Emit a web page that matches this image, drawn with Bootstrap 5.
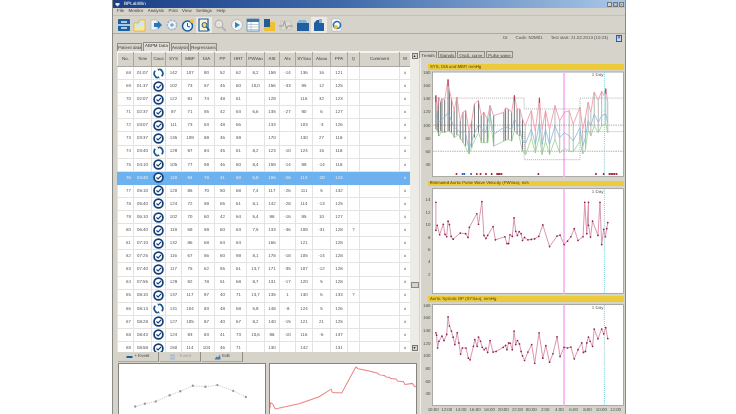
<!DOCTYPE html>
<html lang="en">
<head>
<meta charset="utf-8">
<title>BPLabWin</title>
<link rel="stylesheet" href="https://cdn.jsdelivr.net/npm/bootstrap@5.3.0/dist/css/bootstrap.min.css">
<style>
html,body{height:414px;overflow:hidden;background:#fff}
body{font-family:"Liberation Sans",Arial,sans-serif;font-size:4.4px;line-height:1;color:#444;text-rendering:geometricPrecision}
.appwin{margin-left:112px;width:514px;height:414px;background:#d6d3cb;border-left:1px solid #8a8a86;border-right:1px solid #8a8a86;overflow:hidden;filter:blur(.3px)}
.titlebar{height:8px;padding:0 1px 0 2px;background:linear-gradient(90deg,#1c3f86 0,#3f69aa 45%,#a9c8e8 100%);color:#fff;font-size:4.6px}
.winbtn{width:5px;height:5px;background:#d6d3cb;border:.5px solid #777;color:#333;font-size:4px;text-align:center;margin-left:1px}
.menubar{height:8px;padding-left:4px;gap:4.500px;color:#3c3c3c;border-bottom:1px solid #c4c1b8}
.toolbar{height:17px;padding-left:3px}
.tool{width:16px;height:16px;flex:none;padding:1px}
.tool svg{display:block;width:14px;height:14px}
.tool.on{background:#ece9e2}
.tool-gap{margin-left:1px}
.infobar{height:10px;gap:8px;padding-right:3px;border-top:1px solid #aaa8a0;color:#4c4c4c}
.closex{width:6px;height:7px;background:#cfd8ea;border:.5px solid #345a9a;color:#1c3f86;font-weight:700;font-size:5px;text-align:center}
.leftcol{width:306px;flex:none;padding-left:4px}
.rightcol{flex:1 1 auto;padding-top:8px;min-width:0}
.tabline{height:9px;gap:1px;border-bottom:1px solid #f4f3ef}
.tabitem{height:8px;flex:none;padding:2px 0 0;border:.5px solid #8f8d86;border-bottom:0;background:#d6d3cb;color:#3c3c3c;text-align:center;white-space:nowrap;overflow:hidden}
.tabitem.on{height:9px;padding-top:1px;background:#e0ddd6;color:#333}
.lt1{width:25px}.lt2{width:27px}.lt3{width:18px}.lt4{width:27px}
.rtabs{height:7px;gap:1px}
.rtabs .tabitem{height:7px;padding-top:1.500px;border-bottom:.5px solid #8f8d86}
.rtabs .tabitem.on{border-bottom:0;background:#d6d3cb}
.tw1{width:18px}.tw2{width:18px}.tw3{width:28px}.tw4{width:27px}
.gridwrap{height:300px;overflow:hidden}
.datagrid{width:292px;table-layout:fixed;margin:0;border-collapse:collapse;background:#fff}
.datagrid th,.datagrid td{height:13.1px;padding:0 2px;border:1px solid #e4e3df;text-align:center;vertical-align:middle;font-size:4.4px;font-weight:400;color:#4c4c4c;background:#fff;box-shadow:none;overflow:hidden;white-space:nowrap}
.datagrid thead th{height:14px;background:#d6d3cb;border-color:#a9a7a0;border-top-color:#f4f3ef;border-left-color:#f4f3ef;color:#3c3c3c;padding:0}
.datagrid td:first-child{text-align:right;color:#5c5c5c}
.datagrid tr.picked td{background:#6eb1ef;color:#e9f3fc;border-color:#6eb1ef}
.datagrid td.ic{padding:0;overflow:visible}
.datagrid td svg{display:block;width:11px;height:11px;margin:auto}
.c1{width:16px}.c2{width:18px}.c3{width:14px}.c4{width:16px}.c5{width:17px}.c6{width:16px}.c7{width:16px}.c8{width:16px}.c9{width:18px}.c10{width:15px}.c11{width:16px}.c12{width:17px}.c13{width:18px}.c14{width:17px}.c15{width:12px}.c16{width:40px}.c17{width:11px}
.vscroll{width:9px;flex:none;height:300px;background:#ecebe6}
.sbtn{height:6px;width:6px;margin:1px auto;background:#d6d3cb;border:.5px solid #777;color:#222;font-size:4px;text-align:center}
.sthumb{height:6px;width:8px;margin:0 auto;background:#d6d3cb;border:.5px solid #888}
.btnstrip{height:11px;gap:1px;padding-left:1px}
.evbtn{width:41px;height:10px;background:#d6d3cb;border-right:1px solid #8f8d86;border-bottom:1px solid #aaa8a0;color:#3c3c3c}
.evbtn.off{color:#9d9b94}
.evbtn svg{width:7px;height:6px;margin-right:1px}
.miniplots{height:51px;gap:3px;padding-left:1px}
.miniplot{width:148px;height:51px;background:#fff;border:1px solid #85837d;border-bottom:0;flex:none}
.miniplot svg{display:block;width:100%;height:100%}
.trendbox{height:356px;overflow:hidden;margin-left:1px;padding:6px 1px 0 7px;border-left:1px solid #f1f0ec;background:#d6d3cb}
.charttitle{height:5.500px;width:196px;background:#eccb3b;color:#4d420f;padding:.7px 2px 0;font-size:4.3px;white-space:nowrap}
.plotsvg{display:block;width:202px;margin-left:-6px}
.p1{height:110px;margin-bottom:1px}.p2{height:107px;margin-top:2px;margin-bottom:1px}.p3{height:110px;margin-top:2px}
.plotsvg text{font-family:"Liberation Sans",Arial,sans-serif;font-size:13px;fill:#4c4c4c}
</style>
</head>
<body>
<svg width="0" height="0" class="position-absolute">
  <symbol id="clk" viewBox="0 0 12 12"><circle cx="6" cy="6" r="4.8" fill="#fff" stroke="#123f75" stroke-width="1.900"/><path d="M3.800 6.100 5.600 7.500 8.800 4.200" fill="none" stroke="#123f75" stroke-width="1.300"/></symbol>
  <symbol id="rfr" viewBox="0 0 12 12"><path d="M6.800 1.300A4.700 4.700 0 0 1 9.600 9M5.200 10.700A4.700 4.700 0 0 1 2.400 3" fill="none" stroke="#1a5590" stroke-width="1.900"/><path d="M4.600 .6 7.400 1.300 6 3.400M7.400 11.400 4.600 10.700 6 8.600" fill="#1a5590"/></symbol>
</svg>

<div class="appwin d-flex flex-column">
  <div class="titlebar d-flex align-items-center">
    <svg width="5" height="5" viewBox="0 0 10 10" class="me-1"><path d="M1 2h8v3l-4 4-4-4z" fill="#dfe9f7"/></svg>
    <span>BPLabWin</span>
    <span class="winbtn ms-auto">_</span><span class="winbtn">□</span><span class="winbtn">×</span>
  </div>
  <div class="menubar d-flex align-items-center"><span>File</span><span>Monitor</span><span>Analysis</span><span>Print</span><span>View</span><span>Settings</span><span>Help</span></div>
  <div class="toolbar d-flex align-items-center">
    <div class="tool"><svg viewBox="0 0 14 14"><rect x="1" y="1" width="12" height="12" rx="1" fill="#1b5f9e"/><path d="M4 4h6M4 10h6M1 7h12" stroke="#d7ecfb" stroke-width="1.600"/></svg></div>
    <div class="tool"><svg viewBox="0 0 14 14"><path d="M1 5h5V2h6v11H1z" fill="#f9e7a0" stroke="#d4a92a" stroke-width=".6"/><path d="M3 6h4V3h4v4H7v3H3z" fill="#cfe6f7"/></svg></div>
    <div class="tool"><svg viewBox="0 0 14 14"><path d="M2 2h6v10H2z" fill="#eef3f8" stroke="#9ab" stroke-width=".5"/><path d="M5 5h4V3l4 4-4 4V9H5z" fill="#2477b8"/></svg></div>
    <div class="tool"><svg viewBox="0 0 14 14"><circle cx="7" cy="7" r="4.600" fill="#f3f5f7" stroke="#9db5cc" stroke-width="1.600" stroke-dasharray="2.200 1"/><circle cx="7" cy="7" r="1.800" fill="#6fa6d4"/></svg></div>
    <div class="tool"><svg viewBox="0 0 14 14"><circle cx="6.500" cy="8" r="5" fill="#eef5fb" stroke="#1c5d9c" stroke-width="1.500"/><path d="M6.500 5v3.300L9 9" fill="none" stroke="#1c5d9c"/><circle cx="11" cy="3" r="2" fill="#f1c232"/></svg></div>
    <div class="tool on"><svg viewBox="0 0 14 14"><path d="M2 1h9v12H2z" fill="#fdf6d6" stroke="#1c5d9c" stroke-width="1.200"/><circle cx="7.500" cy="7" r="2.500" fill="#f6d565" stroke="#1c5d9c"/><path d="M9.500 9l3 3.500" stroke="#1c5d9c" stroke-width="1.500"/></svg></div>
    <div class="tool"><svg viewBox="0 0 14 14"><circle cx="6" cy="6" r="3.800" fill="#e3e1db" stroke="#b3b1aa" stroke-width="1.200"/><path d="M8.800 8.800 13 13" stroke="#b3b1aa" stroke-width="1.800"/></svg></div>
    <div class="tool tool-gap"><svg viewBox="0 0 14 14"><circle cx="7" cy="7" r="5.500" fill="#f3f4f4" stroke="#b6bcc2"/><path d="M5 4l5 3-5 3z" fill="#2f83bf"/></svg></div>
    <div class="tool"><svg viewBox="0 0 14 14"><rect x="1" y="1" width="12" height="12" fill="#fff" stroke="#5a86ad" stroke-width=".8"/><rect x="1" y="1" width="12" height="3" fill="#3a76aa"/><path d="M1 6.500h12M1 9h12M1 11.500h12M5 4v9" stroke="#9db7cd" stroke-width=".7"/></svg></div>
    <div class="tool tool-gap"><svg viewBox="0 0 14 14"><rect x="1" y="1" width="6" height="12" fill="#1f5c99"/><rect x="7" y="4" width="5" height="9" fill="#efc132"/><rect x="1" y="9" width="6" height="4" fill="#efc132"/></svg></div>
    <div class="tool"><svg viewBox="0 0 14 14"><rect x="2" y="3" width="10" height="9" fill="#dcdad4" stroke="#bbb9b2" stroke-width=".6"/><path d="M0 8h4l1.500-5 2 8 1.500-3h5" fill="none" stroke="#9a9892" stroke-width="1"/></svg></div>
    <div class="tool tool-gap"><svg viewBox="0 0 14 14"><path d="M1 5 3 2h7l1 3z" fill="#7fb1d9"/><rect x="1" y="5" width="12" height="8" fill="#1f5f9f"/></svg></div>
    <div class="tool on"><svg viewBox="0 0 14 14"><path d="M2 5l3-3h5v3h2v8H2z" fill="#1f5f9f"/><path d="M7 1h3v4H7z" fill="#7fb1d9"/></svg></div>
    <div class="tool tool-gap"><svg viewBox="0 0 14 14"><path d="M3 1h7l2 2v10H3z" fill="#fbfbfb" stroke="#aab" stroke-width=".5"/><circle cx="8" cy="7" r="3.500" fill="none" stroke="#1f6fae" stroke-width="1.600"/><circle cx="7" cy="9" r="2" fill="#f1c232"/></svg></div>
  </div>
  <div class="infobar d-flex align-items-center justify-content-end">
    <span>DI</span><span>Code: N2M01</span><span>Test start: 21.02.2013 (10:23)</span><span class="closex">×</span>
  </div>
  <div class="d-flex flex-grow-1">
    <div class="leftcol d-flex flex-column">
      <div class="tabline d-flex align-items-end">
        <span class="tabitem lt1">Patient data</span><span class="tabitem on lt2">ABPM Data</span><span class="tabitem lt3">Analysis</span><span class="tabitem lt4">Regressions</span>
      </div>
      <div class="d-flex">
        <div class="gridwrap">
          <table class="table datagrid">
            <thead><tr><th class="c1">No.</th><th class="c2">Time</th><th class="c3">Caus</th><th class="c4">SYS</th><th class="c5">MBP</th><th class="c6">DIA</th><th class="c7">PP</th><th class="c8">HRT</th><th class="c9">PWVao</th><th class="c10">ASI</th><th class="c11">AIx</th><th class="c12">SYSao</th><th class="c13">AIxao</th><th class="c14">PPA</th><th class="c15">Q</th><th class="c16">Comment</th><th class="c17">W</th></tr></thead>
            <tbody>
<tr><td>68<td>01:07<td class="ic"><svg><use href="#rfr"/></svg><td>142<td>107<td>90<td>52<td>62<td>8,2<td>159<td>-14<td>136<td>16<td>121<td><td><td>x</tr>
<tr><td>69<td>01:37<td class="ic"><svg><use href="#clk"/></svg><td>102<td>73<td>57<td>45<td>60<td>10,0<td>156<td>-33<td>95<td>12<td>125<td><td><td>x</tr>
<tr><td>70<td>02:07<td class="ic"><svg><use href="#clk"/></svg><td>122<td>91<td>74<td>48<td>61<td><td>129<td><td>116<td>32<td>123<td><td><td>x</tr>
<tr><td>71<td>02:37<td class="ic"><svg><use href="#clk"/></svg><td>97<td>71<td>55<td>42<td>63<td>6,6<td>135<td>-27<td>90<td>6<td>127<td><td><td>x</tr>
<tr><td>72<td>03:07<td class="ic"><svg><use href="#clk"/></svg><td>111<td>73<td>63<td>48<td>66<td><td>133<td><td>103<td>-3<td>126<td><td><td>x</tr>
<tr><td>73<td>03:37<td class="ic"><svg><use href="#clk"/></svg><td>135<td>109<td>89<td>46<td>59<td><td>170<td><td>130<td>27<td>118<td><td><td>x</tr>
<tr><td>74<td>03:40<td class="ic"><svg><use href="#rfr"/></svg><td>129<td>97<td>84<td>45<td>61<td>8,2<td>123<td>-10<td>124<td>15<td>118<td><td><td>x</tr>
<tr><td>75<td>04:10<td class="ic"><svg><use href="#clk"/></svg><td>105<td>77<td>59<td>46<td>60<td>8,4<td>159<td>-14<td>99<td>-14<td>118<td><td><td>x</tr>
<tr class="picked"><td>76<td>04:40<td class="ic"><svg><use href="#clk"/></svg><td>119<td>94<td>78<td>41<td>60<td>6,9<td>155<td>-26<td>113<td>-20<td>124<td><td><td>x</tr>
<tr><td>77<td>05:10<td class="ic"><svg><use href="#clk"/></svg><td>120<td>85<td>70<td>50<td>68<td>7,4<td>117<td>-26<td>111<td>5<td>132<td><td><td>x</tr>
<tr><td>78<td>05:40<td class="ic"><svg><use href="#clk"/></svg><td>124<td>72<td>59<td>65<td>61<td>8,1<td>142<td>-28<td>114<td>-13<td>125<td><td><td>x</tr>
<tr><td>79<td>06:10<td class="ic"><svg><use href="#clk"/></svg><td>102<td>70<td>60<td>42<td>64<td>5,4<td>98<td>-16<td>95<td>10<td>127<td><td><td>x</tr>
<tr><td>80<td>06:40<td class="ic"><svg><use href="#clk"/></svg><td>119<td>69<td>59<td>60<td>63<td>7,5<td>133<td>-36<td>109<td>-31<td>128<td>?<td><td>x</tr>
<tr><td>81<td>07:10<td class="ic"><svg><use href="#clk"/></svg><td>132<td>86<td>68<td>64<td>64<td><td>166<td><td>121<td><td>128<td><td><td>x</tr>
<tr><td>82<td>07:25<td class="ic"><svg><use href="#clk"/></svg><td>116<td>67<td>56<td>60<td>59<td>8,1<td>178<td>-18<td>105<td>-14<td>128<td><td><td>x</tr>
<tr><td>83<td>07:40<td class="ic"><svg><use href="#clk"/></svg><td>117<td>75<td>62<td>55<td>61<td>13,7<td>171<td>-35<td>107<td>-12<td>128<td><td><td>x</tr>
<tr><td>84<td>07:55<td class="ic"><svg><use href="#clk"/></svg><td>129<td>92<td>78<td>51<td>68<td>8,7<td>131<td>-17<td>120<td>5<td>128<td><td><td>x</tr>
<tr><td>85<td>08:10<td class="ic"><svg><use href="#clk"/></svg><td>137<td>117<td>97<td>40<td>71<td>13,7<td>135<td>1<td>130<td>6<td>133<td>?<td><td>x</tr>
<tr><td>86<td>08:13<td class="ic"><svg><use href="#rfr"/></svg><td>131<td>104<td>83<td>48<td>68<td>5,9<td>148<td>-8<td>124<td>5<td>126<td><td><td>x</tr>
<tr><td>87<td>08:28<td class="ic"><svg><use href="#clk"/></svg><td>127<td>105<td>87<td>40<td>67<td>8,2<td>140<td>-15<td>121<td>21<td>125<td><td><td>x</tr>
<tr><td>88<td>08:43<td class="ic"><svg><use href="#clk"/></svg><td>124<td>93<td>83<td>41<td>73<td>10,6<td>98<td>-10<td>116<td>-6<td>137<td><td><td>x</tr>
<tr><td>89<td>08:58<td class="ic"><svg><use href="#clk"/></svg><td>150<td>114<td>104<td>46<td>71<td><td>130<td><td>142<td><td>131<td><td><td>x</tr>
            </tbody>
          </table>
        </div>
        <div class="vscroll d-flex flex-column">
          <div class="sbtn">▴</div>
          <div class="flex-grow-1 d-flex flex-column justify-content-end pb-2"><div class="sthumb mb-5"></div></div>
          <div class="sbtn">▾</div>
        </div>
      </div>
      <div class="btnstrip d-flex">
        <div class="evbtn d-flex align-items-center justify-content-center"><svg viewBox="0 0 14 12"><path d="M1 4h12v4H1z" fill="#1f5f9f"/></svg>+ Event</div>
        <div class="evbtn off d-flex align-items-center justify-content-center"><svg viewBox="0 0 14 12"><path d="M2 1h10v4H2zM2 7h10v4H2z" fill="#a9bccf"/></svg>- Event</div>
        <div class="evbtn d-flex align-items-center justify-content-center"><svg viewBox="0 0 14 12"><path d="M1 11 5 5l3 2 4-6 1 10z" fill="#3f7fb6"/></svg>Edit</div>
      </div>
      <div class="miniplots d-flex">
        <div class="miniplot"><svg viewBox="19 58 441 147" preserveAspectRatio="none"><polyline points="68,183 97,175 130,168 172,150 204,138 242,122 280,125 316,120 364,137 402,155" fill="none" stroke="#b5b5b5" stroke-width="2" stroke-dasharray="4 3"/><g fill="#9a9a9a"><circle cx="68" cy="183" r="3.500"/><circle cx="97" cy="175" r="3.500"/><circle cx="130" cy="168" r="3.500"/><circle cx="172" cy="150" r="3.500"/><circle cx="204" cy="138" r="3.500"/><circle cx="242" cy="122" r="3.500"/><circle cx="280" cy="125" r="3.500"/><circle cx="316" cy="120" r="3.500"/><circle cx="364" cy="137" r="3.500"/><circle cx="402" cy="155" r="3.500"/></g></svg></div>
        <div class="miniplot"><svg viewBox="472 58 444 147" preserveAspectRatio="none"><polyline points="472,188 473,172 480,175 488,190 560,175 620,155 658,132 662,142 690,143 733,67 740,72 770,78 800,85 805,90 820,92 825,96 835,97 840,101 855,102 860,108 878,110 882,118 905,115 912,125 916,124" fill="none" stroke="#f07f7f" stroke-width="3"/></svg></div>
      </div>
    </div>
    <div class="rightcol d-flex flex-column">
      <div class="rtabs d-flex">
        <span class="tabitem on tw1">Trends</span><span class="tabitem tw2">Signals</span><span class="tabitem tw3">Oscil. curve</span><span class="tabitem tw4">Pulse wave</span>
      </div>
      <div class="trendbox">
        <div class="charttitle">SYS, DIA and MBP, mmHg</div>
        <svg class="plotsvg p1" viewBox="3 30 597 325">
          <rect x="34" y="36" width="564" height="309" fill="#fff" stroke="#8d8b85" stroke-width="2"/>
          <g text-anchor="end"><text x="28" y="42">180</text><text x="28" y="79">160</text><text x="28" y="119">140</text><text x="28" y="157">120</text><text x="28" y="197">100</text><text x="28" y="236">80</text><text x="28" y="275">60</text><text x="28" y="314">40</text></g>
          <rect x="420" y="36" width="6" height="309" fill="#f7bdf5"/>
          <path d="M44 105V205M48 150V210M52 110V225M58 125V210M62 115V215M70 118V215M80 58V210M84 90V212M90 115V215M98 150V230M106 110V222M116 180V235M124 155V245M132 150V255M142 210V278M150 180V260M158 130V230M170 120V215M178 165V245M186 155V245M196 175V245M204 135V165M215 165V255M245 155V240M250 142V238M258 145V235M268 155V240M276 105V210M284 145V220M292 145V225M300 175V270" stroke="#666" stroke-width="2.600"/>
          <path d="M308 195V280M326 150V230M338 210V275M350 112V225M358 205V280M368 150V240M380 205V280M396 135V235M410 180V275M438 150V270M450 190V272M470 140V240M478 205V278M486 170V265M494 125V205M502 155V225M512 95V195M524 120V215M534 92V195M546 85V190M552 125V215" stroke="#989898" stroke-width="2"/>
          <path d="M36 193H598M36 270H598" stroke="#555" stroke-width="1.500" stroke-dasharray="4 3"/>
          <path d="M36 113H305V145H470V113H598M36 212H305V295H470V212H598" fill="none" stroke="#666" stroke-width="1.500" stroke-dasharray="3 3"/>
          <polyline points="44,205 48,210 54,225 60,210 70,215 80,210 90,215 100,230 110,220 125,245 142,278 155,245 170,215 180,245 190,245 198,245 204,165 215,255 245,240 258,235 268,240 276,210 290,225 300,270 310,280 326,230 338,275 350,225 358,280 368,240 380,280 396,235 410,275 424,262 438,270 450,272 470,240 478,278 486,265 494,205 502,225 512,195 524,215 534,195 546,190 552,215" fill="none" stroke="#94d28e" stroke-width="2.400"/>
          <polyline points="44,160 52,185 62,175 70,170 80,155 90,180 100,200 116,215 130,210 142,265 155,225 170,190 180,205 190,215 204,160 215,220 245,200 258,200 268,205 276,175 290,195 300,240 310,245 326,205 338,250 350,185 358,250 368,205 380,250 396,195 410,230 424,215 438,225 450,240 470,200 478,255 486,230 494,180 502,195 512,160 524,185 534,165 546,160 552,185" fill="none" stroke="#7fb5d0" stroke-width="2.200"/>
          <polyline points="44,105 48,150 52,110 58,125 62,115 70,118 80,58 84,90 90,115 98,150 106,110 116,180 124,155 132,150 142,210 150,180 158,130 170,120 178,165 186,155 196,175 204,135 215,165 245,155 250,142 258,145 268,155 276,105 284,145 292,145 300,175 308,195 326,150 338,210 350,112 358,205 368,150 380,205 396,135 410,180 424,155 438,150 450,190 470,140 478,205 486,170 494,125 502,155 512,95 524,120 534,92 540,105 546,85 552,125" fill="none" stroke="#f28fa4" stroke-width="2.400"/>
          <path d="M44 105v20M80 58v20M276 105v15M350 112v15M546 85v15" stroke="#9d2a45" stroke-width="2.500"/>
          <path d="M542 36V345" stroke="#7ccfd6" stroke-width="3" stroke-dasharray="3 3"/>
          <text x="505" y="48">1 Day</text>
          <g fill="#a01c32"><circle cx="105" cy="337" r="3"/><circle cx="165" cy="337" r="3"/><circle cx="176" cy="337" r="3"/><circle cx="192" cy="337" r="3"/><circle cx="209" cy="337" r="3"/><circle cx="225" cy="337" r="3"/><circle cx="229" cy="337" r="3"/><circle cx="233" cy="337" r="3"/><circle cx="238" cy="337" r="3"/><circle cx="347" cy="337" r="3"/><circle cx="517" cy="337" r="3"/><circle cx="540" cy="337" r="3"/><circle cx="557" cy="337" r="3"/><circle cx="562" cy="337" r="3"/><circle cx="567" cy="337" r="3"/><circle cx="572" cy="337" r="3"/><circle cx="578" cy="337" r="3"/></g>
          <g fill="#2a4fd0"><circle cx="123" cy="337" r="3"/><circle cx="128" cy="337" r="3"/><circle cx="148" cy="337" r="3"/></g>
        </svg>
        <div class="charttitle">Estimated Aortic Pulse Wave Velocity (PWVao), m/s</div>
        <svg class="plotsvg p2" viewBox="3 30 597 316">
          <rect x="34" y="32" width="564" height="310" fill="#fff" stroke="#8d8b85" stroke-width="2"/>
          <g text-anchor="end"><text x="28" y="69">14</text><text x="28" y="106">12</text><text x="28" y="143">10</text><text x="28" y="180">8</text><text x="28" y="217">6</text><text x="28" y="253">4</text><text x="28" y="290">2</text></g>
          <rect x="420" y="32" width="6" height="310" fill="#f7bdf5"/>
          <path d="M542 32V342" stroke="#7ccfd6" stroke-width="3" stroke-dasharray="3 3"/>
          <text x="505" y="45">1 Day</text>
          <polyline points="44,72 44,155 48,140 55,168 66,137 71,167 76,174 80,128 84,138 89,173 95,181 116,163 132,165 139,176 143,146 165,106 170,137 180,70 186,170 192,179 197,170 213,144 220,183 248,174 254,194 259,194 263,168 270,173 275,118 280,158 285,170 290,159 296,165 300,185 306,176 316,183 326,182 336,180 348,173 360,139 380,203 402,172 411,169 423,197 433,187 443,174 453,150 464,185 479,174 484,72 490,165 495,72 495,140 501,175 507,128 523,170 529,72 534,197 540,152 545,174 549,150 552,132" fill="none" stroke="#d691ac" stroke-width="2.800"/>
          <path d="M44 72h.1M44 155h.1M48 140h.1M55 168h.1M66 137h.1M71 167h.1M76 174h.1M80 128h.1M84 138h.1M89 173h.1M95 181h.1M116 163h.1M132 165h.1M139 176h.1M143 146h.1M165 106h.1M170 137h.1M180 70h.1M186 170h.1M192 179h.1M197 170h.1M213 144h.1M220 183h.1M248 174h.1M254 194h.1M259 194h.1M263 168h.1M270 173h.1M275 118h.1M280 158h.1M285 170h.1M290 159h.1M296 165h.1M300 185h.1M306 176h.1M316 183h.1M326 182h.1M336 180h.1M348 173h.1M360 139h.1M380 203h.1M402 172h.1M411 169h.1M423 197h.1M433 187h.1M443 174h.1M453 150h.1M464 185h.1M479 174h.1M484 72h.1M490 165h.1M495 72h.1M495 140h.1M501 175h.1M507 128h.1M523 170h.1M529 72h.1M534 197h.1M540 152h.1M545 174h.1M549 150h.1M552 132h.1" stroke="#8e1f55" stroke-width="5" stroke-linecap="round"/>
        </svg>
        <div class="charttitle">Aortic Systolic BP (SYSao), mmHg</div>
        <svg class="plotsvg p3" viewBox="3 30 597 325">
          <rect x="34" y="32" width="564" height="298" fill="#fff" stroke="#8d8b85" stroke-width="2"/>
          <g text-anchor="end"><text x="28" y="38">180</text><text x="28" y="75">160</text><text x="28" y="113">140</text><text x="28" y="150">120</text><text x="28" y="187">100</text><text x="28" y="225">80</text><text x="28" y="262">60</text><text x="28" y="299">40</text></g>
          <g text-anchor="middle"><text x="36" y="347">10:00</text><text x="76" y="347">12:00</text><text x="118" y="347">14:00</text><text x="160" y="347">16:00</text><text x="202" y="347">18:00</text><text x="243" y="347">20:00</text><text x="285" y="347">22:00</text><text x="326" y="347">00:00</text><text x="367" y="347">2:00</text><text x="409" y="347">4:00</text><text x="451" y="347">6:00</text><text x="492" y="347">8:00</text><text x="533" y="347">10:00</text><text x="575" y="347">12:00</text></g>
          <rect x="420" y="32" width="6" height="298" fill="#f7bdf5"/>
          <path d="M542 32V330" stroke="#7ccfd6" stroke-width="3" stroke-dasharray="3 3"/>
          <text x="505" y="45">1 Day</text>
          <polyline points="44,115 46,122 49,160 53,140 62,125 68,138 76,120 80,68 84,95 90,110 95,128 100,150 107,115 112,145 117,178 122,160 133,160 140,190 145,195 155,155 159,135 166,155 170,128 176,140 181,158 187,165 192,160 197,173 204,138 213,172 222,170 243,158 250,152 254,165 259,145 264,146 270,165 275,110 280,150 285,138 291,148 296,170 300,183 306,197 316,172 327,150 336,205 349,115 360,190 369,153 380,202 390,177 402,127 411,185 423,158 433,160 443,157 453,192 464,165 475,145 480,173 486,170 490,145 495,128 500,140 507,155 512,104 523,133 534,104 540,118 546,100 552,132" fill="none" stroke="#d691ac" stroke-width="2.800"/>
          <path d="M44 115h.1M46 122h.1M49 160h.1M53 140h.1M62 125h.1M68 138h.1M76 120h.1M80 68h.1M84 95h.1M90 110h.1M95 128h.1M100 150h.1M107 115h.1M112 145h.1M117 178h.1M122 160h.1M133 160h.1M140 190h.1M145 195h.1M155 155h.1M159 135h.1M166 155h.1M170 128h.1M176 140h.1M181 158h.1M187 165h.1M192 160h.1M197 173h.1M204 138h.1M213 172h.1M222 170h.1M243 158h.1M250 152h.1M254 165h.1M259 145h.1M264 146h.1M270 165h.1M275 110h.1M280 150h.1M285 138h.1M291 148h.1M296 170h.1M300 183h.1M306 197h.1M316 172h.1M327 150h.1M336 205h.1M349 115h.1M360 190h.1M369 153h.1M380 202h.1M390 177h.1M402 127h.1M411 185h.1M423 158h.1M433 160h.1M443 157h.1M453 192h.1M464 165h.1M475 145h.1M480 173h.1M486 170h.1M490 145h.1M495 128h.1M500 140h.1M507 155h.1M512 104h.1M523 133h.1M534 104h.1M540 118h.1M546 100h.1M552 132h.1" stroke="#8e1f55" stroke-width="5" stroke-linecap="round"/>
        </svg>
      </div>
    </div>
  </div>
</div>
</body>
</html>
